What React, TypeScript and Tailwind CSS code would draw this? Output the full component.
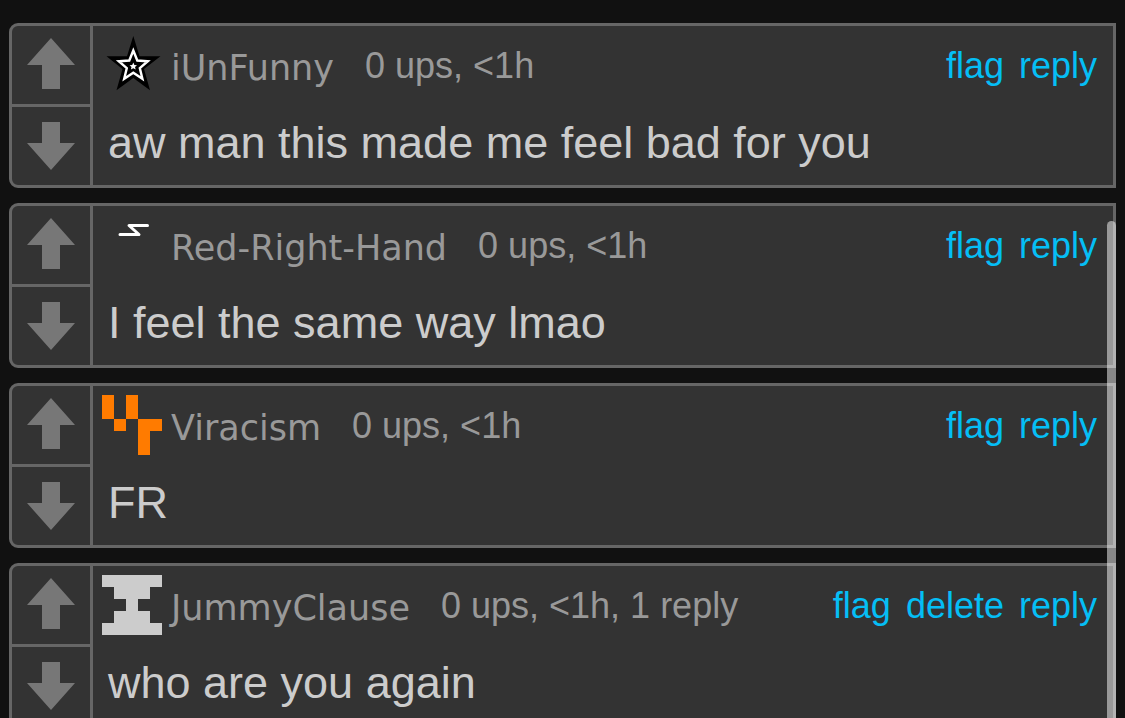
import React from "react";

const IconStar = () => (
  <svg viewBox="0 0 60 60" className="size-[60px]" aria-hidden="true">
    <polygon points="31.3,1 37.5,21.3 58.5,21.3 42,34 48,55.3 31.3,43 14.5,55.3 20.5,34 4.5,21.3 25,21.3" fill="#000" />
    <polygon
      points="31.3,15.5 35.3,25.5 45.8,26.2 37.8,33.1 40.4,43.8 31.3,37.8 22.2,43.8 24.8,33.1 16.8,26.2 27.3,25.5"
      fill="none"
      stroke="#fff"
      strokeWidth="2.4"
    />
    <polygon points="31.3,27.5 32.4,30 35,30.3 33,32 33.7,34.5 31.3,33.2 28.9,34.5 29.5,32 27.6,30.3 30.2,30" fill="#fff" />
  </svg>
);

const IconBolt = () => (
  <svg viewBox="0 0 60 60" className="size-[60px]" aria-hidden="true">
    <path d="M45.5 10.500H27L37 19.500H18" fill="none" stroke="#fff" strokeWidth="3" strokeLinecap="round" strokeLinejoin="round" />
  </svg>
);

const IconBlocks = () => (
  <svg viewBox="0 0 5 5" className="size-[60px]" shapeRendering="crispEdges" aria-hidden="true">
    <path d="M0 0h1v2H0zM2 0h1v2H2zM1 2h1v1H1zM3 2h2v1H4v2H3z" fill="#ff7b00" />
  </svg>
);

const IconPillar = () => (
  <svg viewBox="0 0 5 5" className="size-[60px]" shapeRendering="crispEdges" aria-hidden="true">
    <path d="M0 0h5v1H4v1H3v1h1v1h1v1H0V4h1V3h1V2H1V1H0z" fill="#ccc" />
  </svg>
);

const comments = [
  {
    user: "iUnFunny",
    icon: <IconStar />,
    stats: "0 ups, <1h",
    text: "aw man this made me feel bad for you",
    actions: ["flag", "reply"],
  },
  {
    user: "Red-Right-Hand",
    icon: <IconBolt />,
    stats: "0 ups, <1h",
    text: "I feel the same way lmao",
    actions: ["flag", "reply"],
  },
  {
    user: "Viracism",
    icon: <IconBlocks />,
    stats: "0 ups, <1h",
    text: "FR",
    actions: ["flag", "reply"],
  },
  {
    user: "JummyClause",
    icon: <IconPillar />,
    stats: "0 ups, <1h, 1 reply",
    text: "who are you again",
    actions: ["flag", "delete", "reply"],
  },
];

const VoteButtons = () => (
  <div className="flex w-[81px] shrink-0 flex-col border-r-[3px] border-[#666]">
    <button type="button" aria-label="Upvote" className="flex h-[81px] justify-center border-b-[3px] border-[#666] pt-3">
      <svg viewBox="0 0 48 51" className="h-[51px] w-12">
        <path d="M24 0L48 27H33V51H15V27H0z" fill="#777" />
      </svg>
    </button>
    <button type="button" aria-label="Downvote" className="flex h-[78px] items-center justify-center">
      <svg viewBox="0 0 48 48" className="size-12">
        <path d="M15 0H33V21H48L24 48L0 21H15z" fill="#777" />
      </svg>
    </button>
  </div>
);

const App = () => {
  return (
    <div className="relative h-screen overflow-hidden bg-[#111] font-['Liberation_Sans',Arial,sans-serif]">
      <main className="flex flex-col gap-[15px] pt-[23px] pr-[9px] pl-[9px]">
        {comments.map((comment) => (
          <article key={comment.user} className="flex rounded-l-[9px] border-[3px] border-[#666] bg-[#333]">
            <VoteButtons />
            <div className="min-w-0 flex-1 pt-[9px] pr-4 pl-[9px]">
              <header className="flex text-[36px] leading-[62px] whitespace-nowrap text-[#999]">
                {comment.icon}
                <a href="#" className="ml-[9px] pt-0.5 font-['DejaVu_Sans',Verdana,sans-serif] text-[35px] leading-[62px]">
                  {comment.user}
                </a>
                <span className="ml-[31px]">{comment.stats}</span>
                <nav className="ml-auto flex gap-[15px] text-[#05bef5]">
                  {comment.actions.map((action) => (
                    <a key={action} href="#">
                      {action}
                    </a>
                  ))}
                </nav>
              </header>
              <p className="pt-4 pl-[6px] text-[45px] leading-[56px] text-[#ccc]">{comment.text}</p>
            </div>
          </article>
        ))}
      </main>
      {/* scroll thumb */}
      <div className="absolute top-[221px] right-[9px] -bottom-2 w-[9px] rounded-full bg-white/50" />
    </div>
  );
};

export default App;
